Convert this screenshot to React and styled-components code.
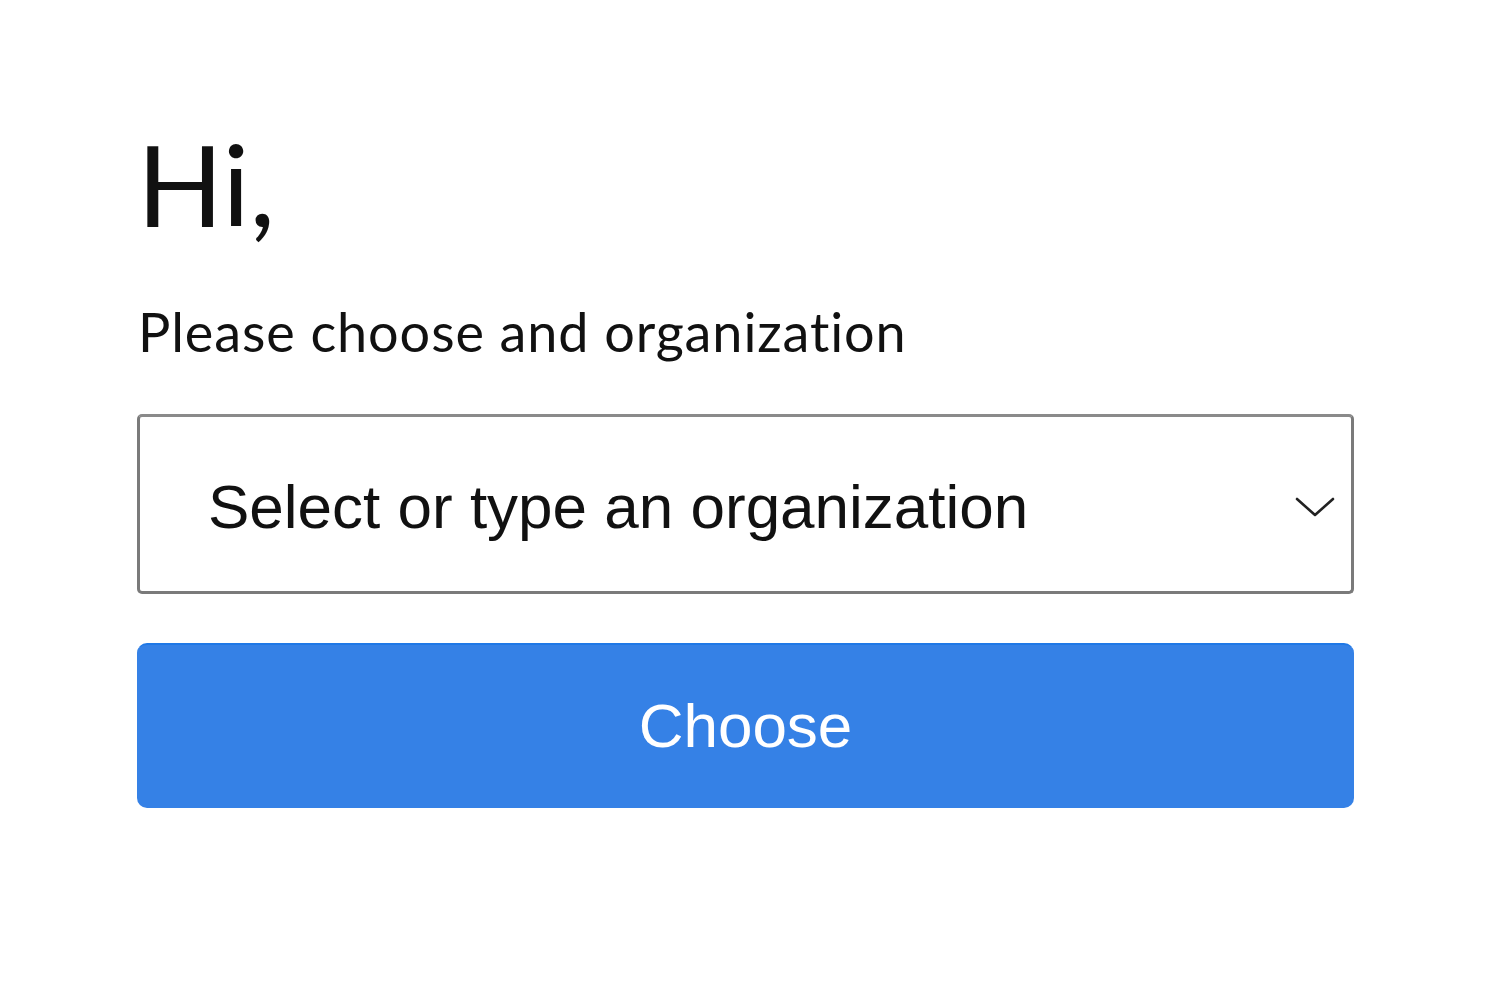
import React from "react";
import styled, { createGlobalStyle } from "styled-components";

const Global = createGlobalStyle`
  html, body { margin: 0; padding: 0; background: #fff; }
  body { font-family: "Liberation Sans", Arial, sans-serif; color: #111; }
`;

const Page = styled.main`
  width: 1500px;
  height: 1000px;
  box-sizing: border-box;
  padding: 127px 146px 0 137px;
  display: flex;
  flex-direction: column;
`;

const Greeting = styled.h1`
  margin: 0;
  font-family: "Lato", sans-serif;
  font-weight: 400;
  font-size: 113px;
  line-height: 1;
  color: #111;
`;

const Prompt = styled.p`
  margin: 65px 0 0 1px;
  font-family: "Lato", sans-serif;
  font-size: 54px;
  letter-spacing: 0.9px;
  line-height: 1;
  color: #111;
`;

const SelectBox = styled.div`
  margin-top: 55px;
  height: 180px;
  box-sizing: border-box;
  border: 3px solid #7a7a7a;
  border-top-color: #8a8a8a;
  border-radius: 5px;
  display: flex;
  align-items: center;
  justify-content: space-between;
  padding: 6px 16px 0 68px;
  background: #fff;
`;

const Placeholder = styled.span`
  font-family: "Liberation Sans", Arial, sans-serif;
  font-size: 62px;
  color: #111;
  line-height: 1;
`;

const Chevron = styled.svg`
  width: 40px;
  height: 24px;
  flex: none;
`;

const ChooseButton = styled.button`
  margin-top: 49px;
  height: 165px;
  border: none;
  border-top: 2px solid #1f78e6;
  border-radius: 10px;
  background: #3581e6;
  color: #fff;
  font-family: "Liberation Sans", Arial, sans-serif;
  font-size: 62px;
  line-height: 1;
  cursor: pointer;
  padding: 0 0 2px;
`;

export default function App() {
  return (
    <>
      <Global />
      <Page>
        <Greeting>Hi,</Greeting>
        <Prompt>Please choose and organization</Prompt>
        <SelectBox role="combobox">
          <Placeholder>Select or type an organization</Placeholder>
          <Chevron viewBox="0 0 40 24" fill="none">
            <path d="M2 4 L20 20 L38 4" stroke="#222" strokeWidth="2.6" strokeLinecap="round" strokeLinejoin="round" />
          </Chevron>
        </SelectBox>
        <ChooseButton>Choose</ChooseButton>
      </Page>
    </>
  );
}
